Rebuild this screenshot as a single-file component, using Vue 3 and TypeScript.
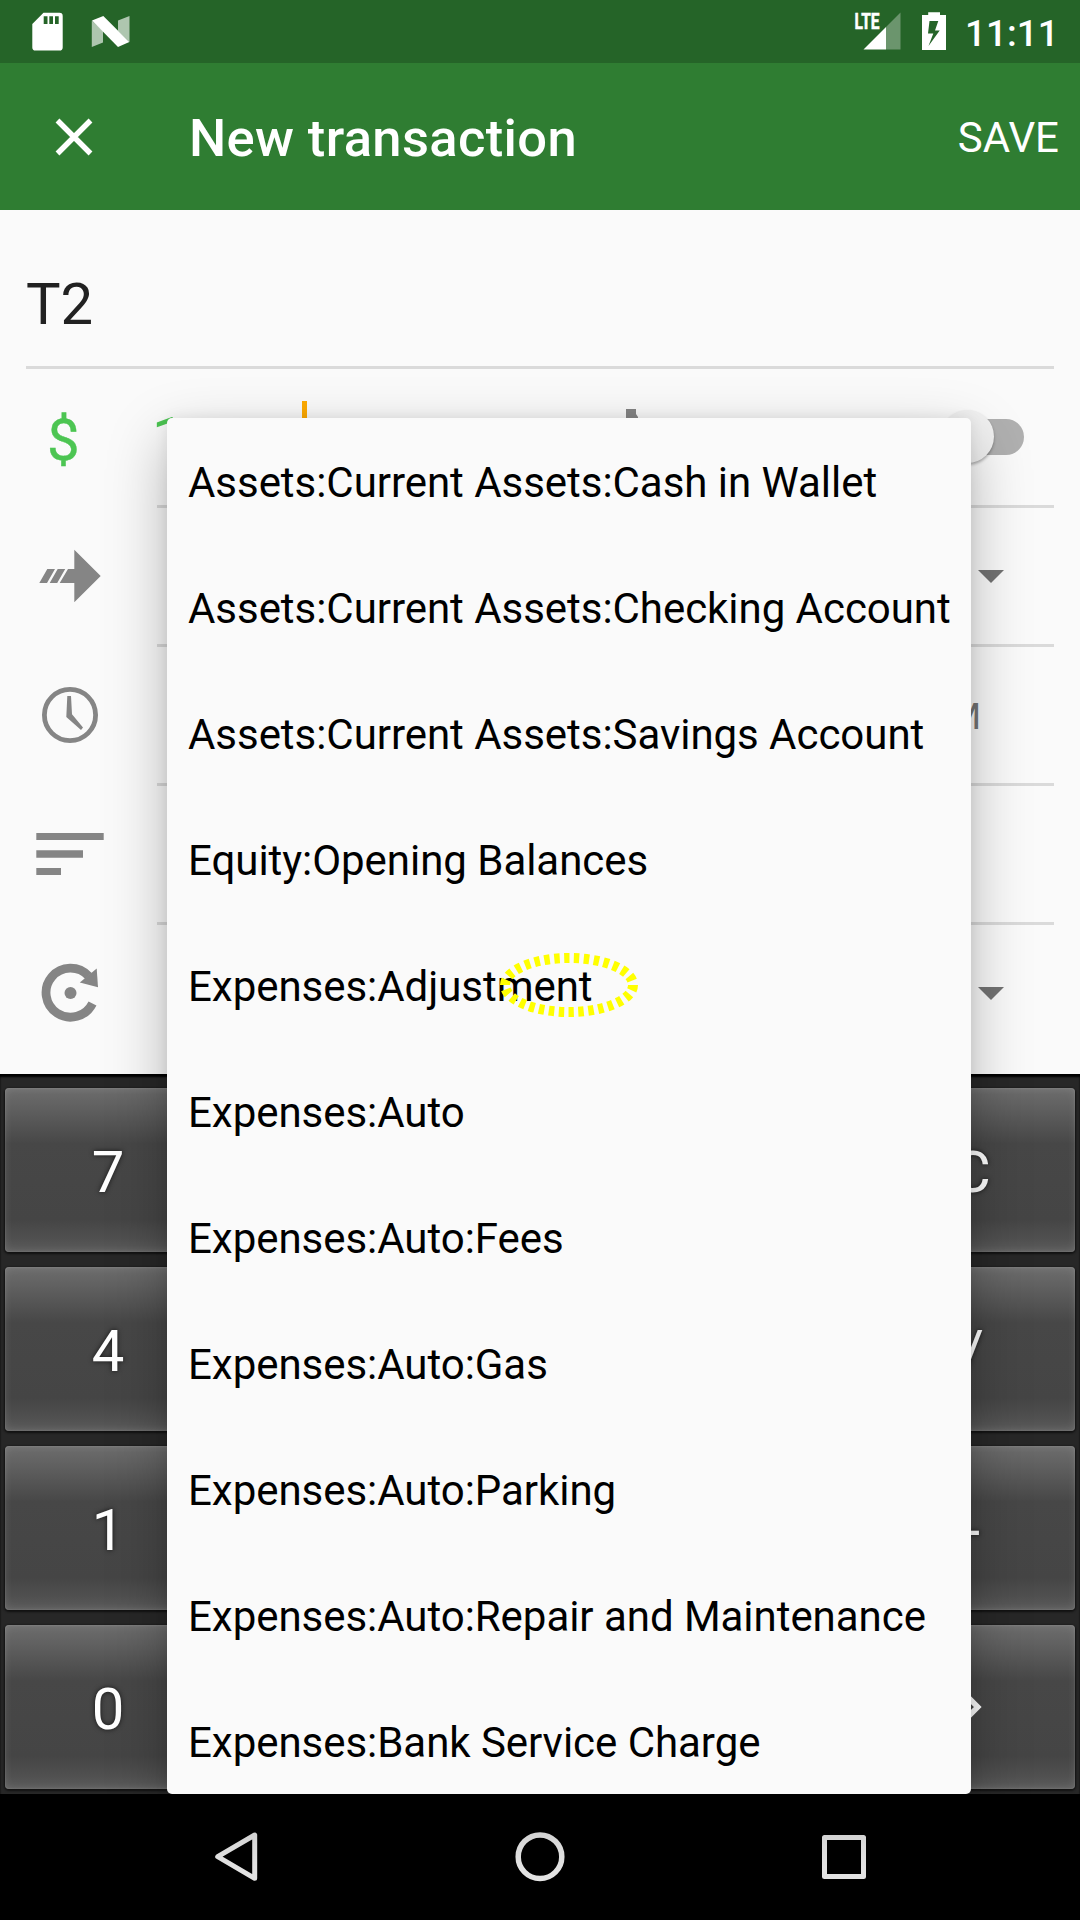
<script setup lang="ts">
const accounts: string[] = [
  'Assets:Current Assets:Cash in Wallet',
  'Assets:Current Assets:Checking Account',
  'Assets:Current Assets:Savings Account',
  'Equity:Opening Balances',
  'Expenses:Adjustment',
  'Expenses:Auto',
  'Expenses:Auto:Fees',
  'Expenses:Auto:Gas',
  'Expenses:Auto:Parking',
  'Expenses:Auto:Repair and Maintenance',
  'Expenses:Bank Service Charge',
]

// Only the outer columns carry a label; the picker covers the rest.
const keyRows: string[][] = [
  ['7', '', '', '', 'C'],
  ['4', '', '', '', '/'],
  ['1', '', '', '', '-'],
  ['0', '', '', '', 'next'],
]
</script>

<template>
  <div class="screen">
    <header class="status">
      <svg class="status-left" width="140" height="63" viewBox="0 0 140 63">
        <path fill="#fff" fill-rule="evenodd" d="M43.500 12.700H59.500Q62.700 12.700 62.700 16V47.500Q62.700 50.600 59.500 50.600H35.500Q32.300 50.600 32.300 47.500V24ZM43.700 16.300V24H47.500V16.300ZM49.300 16.300V24H53V16.300ZM55 16.300V24H58.700V16.300Z" />
        <path fill="#fff" opacity=".63" d="M91.800 20.500L103 31V42.500L91.800 47ZM118 20.500L129.500 16V42L118 31Z" />
        <path fill="#fff" d="M92 20.500L103.300 16L129.300 42L118 47Z" />
      </svg>
      <svg class="status-right" width="110" height="63" viewBox="850 0 110 63">
        <path fill="#fff" opacity=".32" d="M886 27L900.500 12.500V49.500H886Z" />
        <path fill="#fff" d="M863.500 49.500L886 27V49.500Z" />
        <text x="854.500" y="29.300" font-size="22.500" font-weight="700" fill="#fff" stroke="#fff" stroke-width=".6" textLength="25" lengthAdjust="spacingAndGlyphs">LTE</text>
        <path fill="#fff" fill-rule="evenodd" d="M928.200 12.200H940V15H946V50H922V15H928.200ZM929.500 21L928 33.500H933.300L928.500 46L939.700 30.500H935L938.300 21Z" />
      </svg>
      <span class="clock">11:11</span>
    </header>

    <div class="appbar">
      <svg class="close" width="48" height="48" viewBox="0 0 48 48">
        <path d="M7.500 7.500L40.500 40.500M40.500 7.500L7.500 40.500" stroke="#fff" stroke-width="5.400" />
      </svg>
      <h1 class="title">New transaction</h1>
      <span class="save">SAVE</span>
    </div>

    <main class="form">
      <div class="name"><span>T2</span></div>

      <div class="row">
        <div class="lead"><span class="currency">$</span></div>
        <div class="field amount">
          <span class="value">1</span>
          <i class="caret"></i>
          <svg class="kind" width="12" height="40" viewBox="0 0 12 40"><path d="M0 0H10V5L12 8V40H0Z" fill="#858585" /></svg>
          <span class="toggle"><i></i></span>
        </div>
      </div>

      <div class="row">
        <div class="lead">
          <svg width="130" height="136" viewBox="0 508 130 136" fill="#858585">
            <path d="M39.300 583L47.300 569H55L47 583ZM49.700 583L57.700 569H65.200L57.200 583ZM59.700 583L68 569H74.300V549.700L100.700 576L74.300 602.300V583Z" />
          </svg>
        </div>
        <div class="field end"><i class="arrow"></i></div>
      </div>

      <div class="row">
        <div class="lead">
          <svg width="130" height="136" viewBox="0 647 130 136">
            <circle cx="70" cy="715" r="25.600" fill="none" stroke="#858585" stroke-width="4.800" />
            <path fill="#858585" d="M67.300 696H71L72 714.300L83 727.500L81 730L66.300 717Z" />
          </svg>
        </div>
        <div class="field end"><span class="time">M</span></div>
      </div>

      <div class="row">
        <div class="lead">
          <svg width="130" height="136" viewBox="0 786 130 136" fill="#858585">
            <path d="M36.300 833H103.700V840H36.300ZM36.300 850.300H83V857.700H36.300ZM36.300 868H61V875H36.300Z" />
          </svg>
        </div>
        <div class="field"></div>
      </div>

      <div class="row last">
        <div class="lead">
          <svg width="130" height="149" viewBox="0 925 130 149">
            <path d="M92.500 1003.500A24.500 24.500 0 1 1 88.500 976" fill="none" stroke="#858585" stroke-width="8.800" />
            <path d="M96.700 968.500L98 987.300L79.800 982.600Z" fill="#858585" />
            <circle cx="70.500" cy="993" r="6" fill="#858585" />
          </svg>
        </div>
        <div class="field end"><i class="arrow"></i></div>
      </div>
    </main>

    <section class="keypad">
      <div v-for="(row, r) in keyRows" :key="r" class="key-row">
        <div v-for="(label, c) in row" :key="c" class="cell">
          <div class="key">
            <svg v-if="label === 'next'" class="next" width="30" height="40" viewBox="0 0 30 40">
              <path d="M8.800 8L20.800 20L8.800 32" fill="none" stroke="#fff" stroke-width="5.400" />
            </svg>
            <template v-else>{{ label }}</template>
          </div>
        </div>
      </div>
    </section>

    <nav class="nav">
      <svg width="1080" height="126" viewBox="0 1794 1080 126" fill="none" stroke="#e4e4e4" stroke-width="5" stroke-linejoin="round">
        <path d="M254.700 1835V1878.300L217.700 1856.700Z" />
        <circle cx="540" cy="1856.700" r="21.800" stroke-width="5.500" />
        <rect x="824.500" y="1837.500" width="39" height="39" />
      </svg>
    </nav>

    <ul class="picker">
      <li v-for="account in accounts" :key="account">{{ account }}</li>
    </ul>

    <svg class="tap" width="150" height="76" viewBox="0 0 150 76">
      <ellipse cx="75" cy="38" rx="64" ry="27" pathLength="300" fill="none" stroke="#ff0" stroke-width="10" stroke-dasharray="5.500 4.500" />
    </svg>
  </div>
</template>

<style>
body {
  background: #000;
}
</style>

<style scoped>
.screen {
  position: relative;
  width: 1080px;
  height: 1920px;
  overflow: hidden;
  display: flex;
  flex-direction: column;
  background: #fafafa;
  font-family: Roboto, sans-serif;
}
svg {
  display: block;
  flex: none;
}
.status {
  height: 63px;
  flex: none;
  display: flex;
  background: #256428;
  color: #fff;
}
.status-right {
  margin-left: 710px;
}
.clock {
  margin-left: 5px;
  padding-top: 4px;
  line-height: 59px;
  font-size: 37px;
  font-weight: 500;
}
.appbar {
  height: 147px;
  flex: none;
  display: flex;
  align-items: center;
  background: #2f7d32;
  color: #fff;
}
.close {
  margin: 1px 0 0 49.500px;
}
.title {
  margin: 3px 0 0 91.500px;
  font-size: 52.500px;
  font-weight: 500;
  line-height: 62px;
  letter-spacing: 0.36px;
}
.save {
  margin: 2px 21px 0 auto;
  font-size: 42px;
}
.form {
  height: 864px;
  flex: none;
}
.name {
  height: 156px;
  margin: 0 26px;
  border-bottom: 3px solid #dadada;
  display: flex;
  color: #212121;
  font-size: 58px;
  line-height: 68px;
}
.name span {
  padding-top: 60px;
}
.row {
  height: 139px;
  display: flex;
}
.lead {
  width: 157px;
  flex: none;
}
.field {
  width: 897px;
  height: 136px;
  border-bottom: 3px solid #dadada;
  display: flex;
}
.last {
  height: 149px;
}
.last .field {
  height: 149px;
  border: 0;
}
.currency {
  display: block;
  padding: 36px 0 0 47px;
  line-height: 70px;
  font-size: 58px;
  color: #4cc552;
  -webkit-text-stroke: 0.4px #4cc552;
}
.value {
  width: 145px;
  padding: 34px 0 0;
  text-indent: -5px;
  line-height: 70px;
  box-sizing: border-box;
  font-size: 58px;
  color: #4cc552;
}
.caret {
  width: 5px;
  height: 70px;
  margin-top: 32px;
  background: #ffab00;
}
.kind {
  margin: 40px 0 0 319px;
}
.toggle {
  width: 84px;
  height: 36px;
  margin: 50px 30px 0 auto;
  border-radius: 18px;
  background: #b0b0b0;
}
.toggle i {
  display: block;
  width: 53px;
  height: 53px;
  margin: -9px 0 0 1px;
  border-radius: 50%;
  background: #f1f1f1;
  box-shadow: 0 2px 3px rgba(0, 0, 0, 0.3);
}
.end {
  justify-content: flex-end;
}
.arrow {
  width: 26px;
  height: 13px;
  margin: 62px 50px 0 0;
  background: #737373;
  clip-path: polygon(0 0, 100% 0, 50% 100%);
}
.time {
  margin: 48px 73px 0 0;
  line-height: 44px;
  font-size: 37px;
  color: #757575;
}
.keypad {
  height: 720px;
  flex: none;
  box-sizing: border-box;
  padding-top: 4px;
  background: #272727;
  box-shadow: inset 0 3px 2px #000;
}
.key-row {
  height: 179px;
  display: flex;
}
.cell {
  flex: 1;
  padding: 10px 5px 5px;
}
.key {
  height: 164px;
  box-sizing: border-box;
  padding-top: 4px;
  border-radius: 4px;
  display: flex;
  align-items: center;
  justify-content: center;
  background: linear-gradient(#6d6d6d 0%, #606060 12%, #474747 34%, #454545 80%, #505050 92%, #5c5c5c 100%);
  box-shadow: inset 0 0 8px rgba(255, 255, 255, 0.12), inset 0 0 2px rgba(255, 255, 255, 0.2), 0 1px 2px 1px #111;
  color: #fff;
  font-size: 58px;
  text-shadow: 0 0 5px rgba(0, 0, 0, 0.7);
}
.next {
  margin-top: -4px;
}
.nav {
  height: 126px;
  flex: none;
  background: #000;
}
.picker {
  position: absolute;
  left: 167px;
  top: 418px;
  width: 804px;
  height: 1376px;
  margin: 0;
  padding: 0;
  overflow: hidden;
  list-style: none;
  border-radius: 5px;
  background: #fafafa;
  box-shadow: 0 22px 60px rgba(0, 0, 0, 0.28), 0 0 14px rgba(0, 0, 0, 0.08);
  color: #000;
}
.picker li {
  height: 126px;
  padding-left: 21px;
  line-height: 130px;
  font-size: 42px;
  letter-spacing: -0.04px;
  white-space: nowrap;
}
.tap {
  position: absolute;
  left: 494px;
  top: 947px;
}
</style>
